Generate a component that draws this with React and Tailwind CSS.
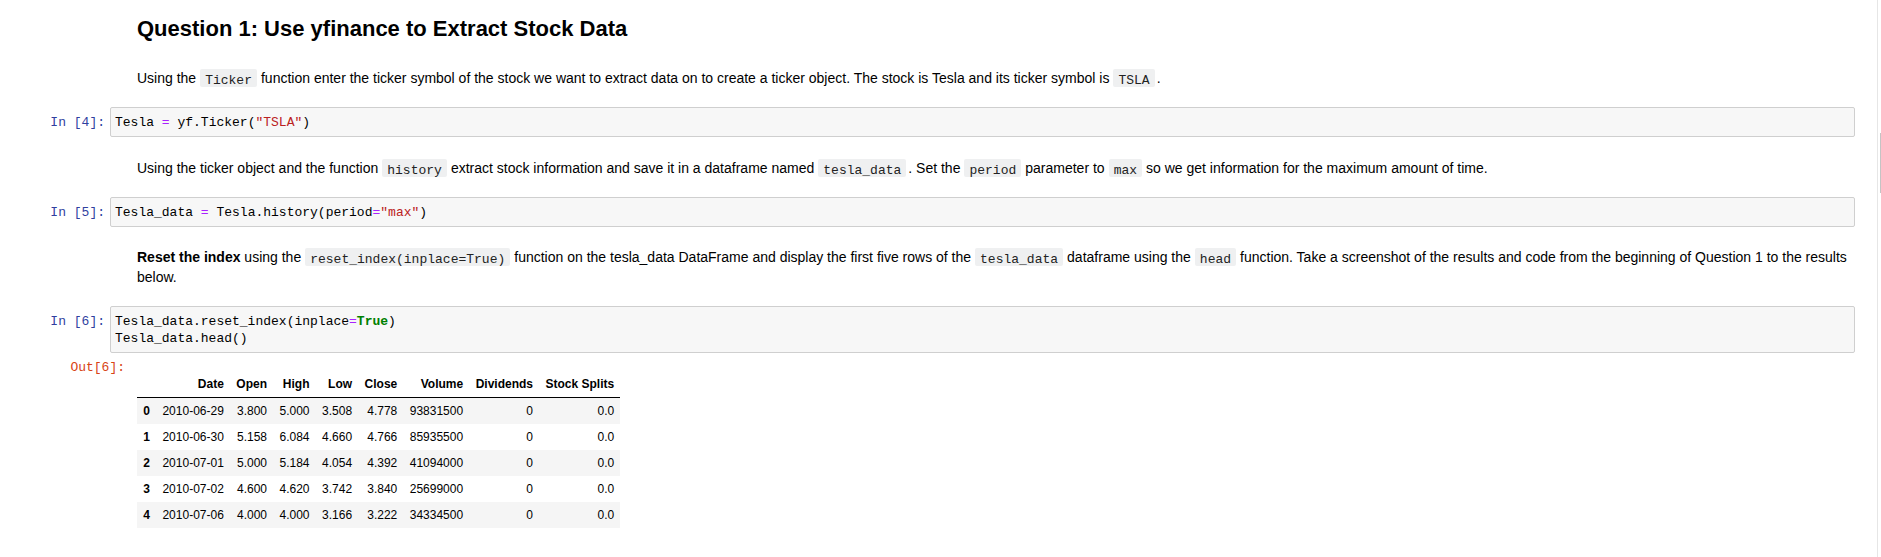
import React from 'react';

const sans = "font-[family-name:'Liberation_Sans',Arial,sans-serif]";
const mono = "font-[family-name:'Liberation_Mono','Courier_New',monospace]";

const rows = [
  ['0', '2010-06-29', '3.800', '5.000', '3.508', '4.778', '93831500', '0', '0.0'],
  ['1', '2010-06-30', '5.158', '6.084', '4.660', '4.766', '85935500', '0', '0.0'],
  ['2', '2010-07-01', '5.000', '5.184', '4.054', '4.392', '41094000', '0', '0.0'],
  ['3', '2010-07-02', '4.600', '4.620', '3.742', '3.840', '25699000', '0', '0.0'],
  ['4', '2010-07-06', '4.000', '4.000', '3.166', '3.222', '34334500', '0', '0.0'],
];

const headers = ['', 'Date', 'Open', 'High', 'Low', 'Close', 'Volume', 'Dividends', 'Stock Splits'];

// inline `code` inside markdown text; the margins stand in for the spaces around it
const Code = ({ children, tight }) => (
  <code
    className={`${mono} text-[13px] leading-[14px] text-[#222] bg-[#eff0f1] rounded-[2px] px-[5px] pt-[3.5px] pb-0 ml-[4px] ${
      tight ? 'mr-[2px]' : 'mr-[4px]'
    }`}
  >
    {children}
  </code>
);

const Markdown = ({ className = '', children }) => (
  <div className={`flex ${className}`}>
    <div className="w-[110px] shrink-0" />
    <div className="flex-1 min-w-0 pl-[27px] pr-[5px]">{children}</div>
  </div>
);

const CodeCell = ({ n, className = '', children }) => (
  <div className={`flex ${className}`}>
    <div className={`${mono} w-[110px] shrink-0 pr-[5px] pt-[6.5px] text-right text-[13px] leading-[17px] text-[#303F9F]`}>
      In&nbsp;[{n}]:
    </div>
    <div className="flex-1 min-w-0 border border-[#cfcfcf] rounded-[2px] bg-[#f7f7f7] px-[4px] py-[5.5px]">
      <pre className={`${mono} text-[13px] leading-[17px] text-black whitespace-pre`}>{children}</pre>
    </div>
  </div>
);

const Op = ({ children }) => <span className="text-[#AA22FF]">{children}</span>;
const Str = ({ children }) => <span className="text-[#BA2121]">{children}</span>;
const Kw = ({ children }) => <span className="text-[#008000] font-bold">{children}</span>;

export default function App() {
  return (
    <div className={`${sans} flex w-full min-h-[557px] bg-white text-black`}>
      <div className="flex-1 min-w-0 pr-[22px] pt-[16px] pb-[20px]">
        <Markdown>
          <h2 className="text-[22px] leading-[26px] font-bold">Question 1: Use yfinance to Extract Stock Data</h2>
        </Markdown>

        <Markdown className="mt-[26px]">
          <p className="text-[14px] leading-[20px]">
            Using the<Code>Ticker</Code>function enter the ticker symbol of the stock we want to extract data on to
            create a ticker object. The stock is Tesla and its ticker symbol is<Code tight>TSLA</Code>.
          </p>
        </Markdown>

        <CodeCell n="4" className="mt-[19px]">
          Tesla <Op>=</Op> yf.Ticker(<Str>"TSLA"</Str>)
        </CodeCell>

        <Markdown className="mt-[21px]">
          <p className="text-[14px] leading-[20px]">
            Using the ticker object and the function<Code>history</Code>extract stock information and save it in a
            dataframe named<Code tight>tesla_data</Code>. Set the<Code>period</Code>parameter to<Code>max</Code>so we
            get information for the maximum amount of time.
          </p>
        </Markdown>

        <CodeCell n="5" className="mt-[19px]">
          Tesla_data <Op>=</Op> Tesla.history(period<Op>=</Op><Str>"max"</Str>)
        </CodeCell>

        <Markdown className="mt-[20px]">
          <p className="text-[14px] leading-[20px]">
            <strong className="font-bold">Reset the index</strong> using the<Code>reset_index(inplace=True)</Code>
            function on the tesla_data DataFrame and display the first five rows of the<Code>tesla_data</Code>
            dataframe using the<Code>head</Code>
            <span>function. Take a screenshot of the results and code from the beginning of Question 1 to the results</span>{' '}
            <span>below.</span>
          </p>
        </Markdown>

        <CodeCell n="6" className="mt-[19px]">
          Tesla_data.reset_index(inplace<Op>=</Op><Kw>True</Kw>){'\n'}Tesla_data.head()
        </CodeCell>

        {/* output area */}
        <div className="flex mt-[6px]">
          <div className={`${mono} w-[130px] shrink-0 pr-[5px] text-right text-[13px] leading-[17px] text-[#D84315]`}>
            Out[6]:
          </div>
          <div className="pl-[7px] pt-[12px]">
            <table className="border-collapse text-[12px] leading-[14px] text-black">
              <thead className="border-b border-black">
                <tr>
                  {headers.map((h, i) => (
                    <th key={i} className="px-[6.25px] py-[6px] text-right font-bold whitespace-nowrap">
                      {h}
                    </th>
                  ))}
                </tr>
              </thead>
              <tbody>
                {rows.map((r, i) => (
                  <tr key={i} className={i % 2 === 0 ? 'bg-[#f5f5f5]' : 'bg-white'}>
                    {r.map((c, j) =>
                      j === 0 ? (
                        <th key={j} className="px-[6.25px] py-[6px] text-right font-bold">
                          {c}
                        </th>
                      ) : (
                        <td key={j} className="px-[6.25px] py-[6px] text-right whitespace-nowrap">
                          {c}
                        </td>
                      )
                    )}
                  </tr>
                ))}
              </tbody>
            </table>
          </div>
        </div>
      </div>

      {/* scrollbar edge */}
      <div className="w-[4px] shrink-0 border-l border-[#e6e6e6] flex justify-end pt-[133px]">
        <div className="w-[1px] h-[60px] bg-[#c4c4c4]" />
      </div>
    </div>
  );
}
